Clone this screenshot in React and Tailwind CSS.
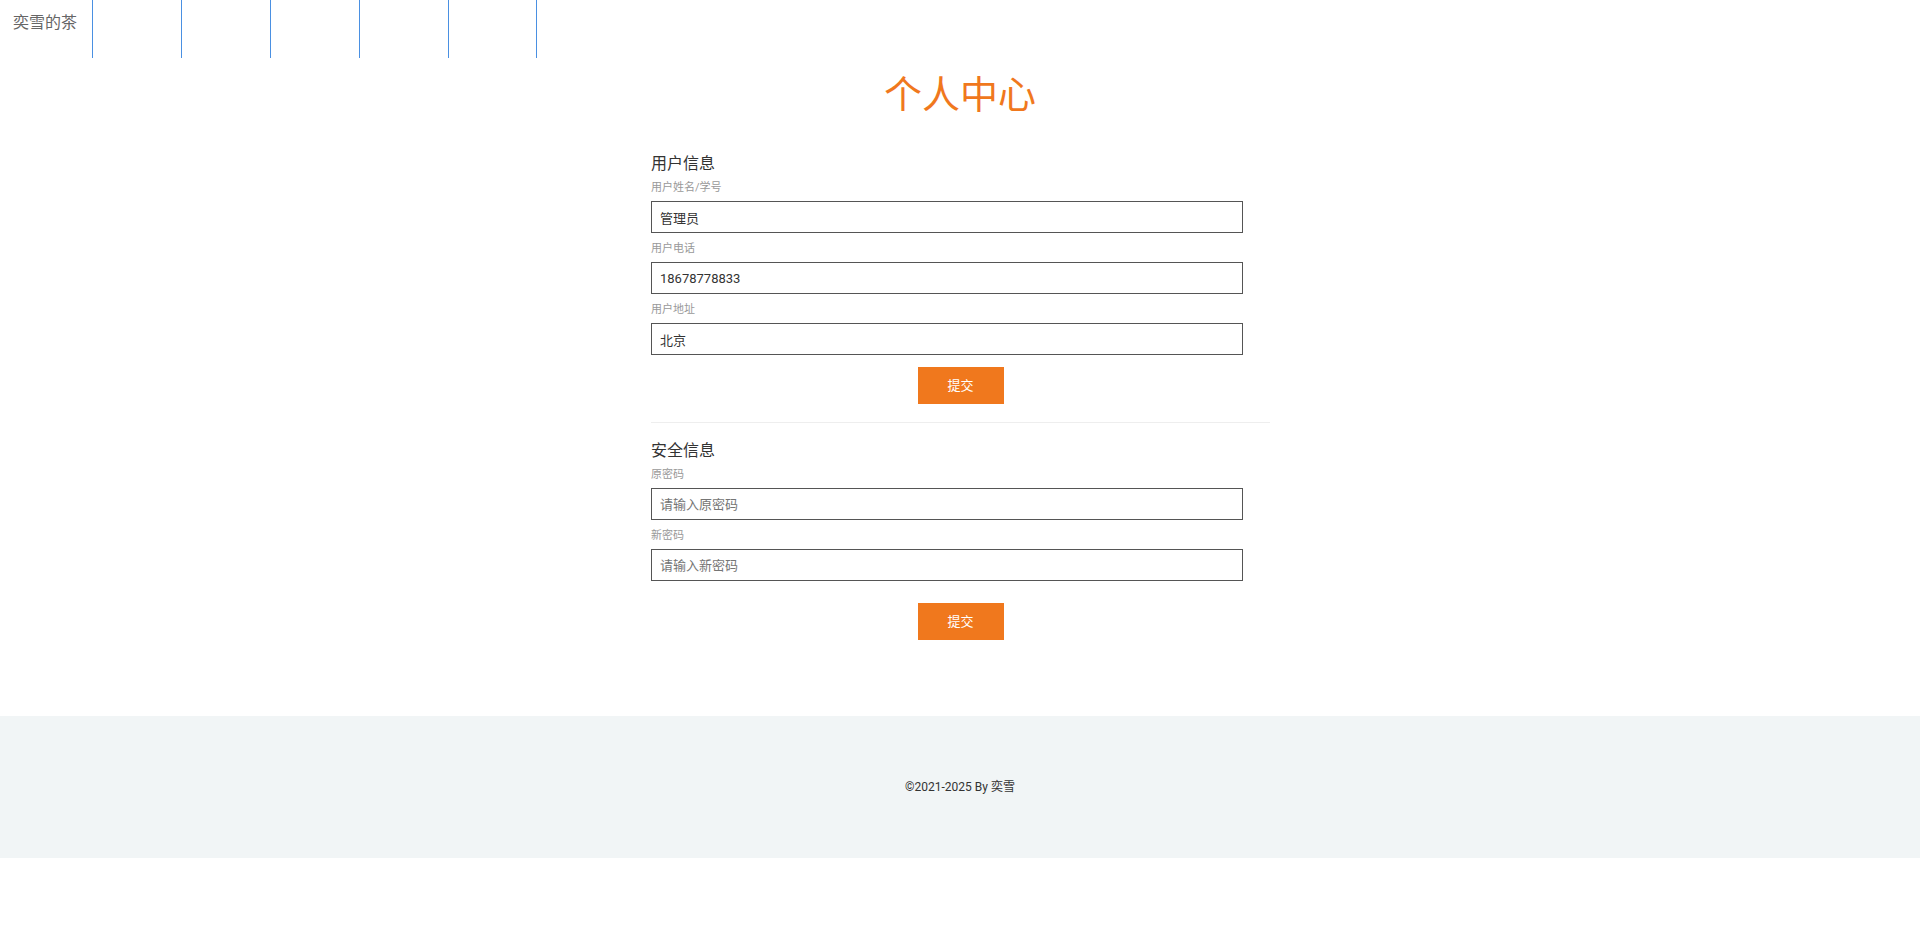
import { useState } from 'react';

const FONT = 'font-[Roboto,"Noto_Sans_CJK_SC",sans-serif]';

const NAV_CELLS = [0, 1, 2, 3, 4];

function Field({ label, value, placeholder, first }) {
  const [val, setVal] = useState(value ?? '');
  return (
    <div className={first ? 'mt-[4px]' : 'mt-[8px]'}>
      <label className="block h-[16px] text-[11px] leading-[16px] text-[#999]">{label}</label>
      <input
        className="mt-[5px] block h-[32px] w-[592px] border border-[#555] px-[8px] text-[13px] text-[#333] outline-none placeholder:text-[#757575]"
        value={val}
        placeholder={placeholder}
        onChange={(e) => setVal(e.target.value)}
      />
    </div>
  );
}

function SubmitButton({ className }) {
  return (
    <div className={`flex justify-center ${className}`}>
      <button
        type="button"
        className="h-[37px] w-[86px] bg-[#f0781d] text-[13px] text-white"
      >
        提交
      </button>
    </div>
  );
}

export default function App() {
  return (
    <div className={`min-h-[938px] bg-white ${FONT}`}>
      {/* top nav */}
      <nav className="flex h-[58px]">
        <div className="w-[92px] pl-[13px] pt-[11px] text-[16px] leading-[24px] text-[#666]">奕雪的茶</div>
        {NAV_CELLS.map((i) => (
          <div
            key={i}
            className={`h-full w-[89px] border-l border-[#4a90e2] ${i === NAV_CELLS.length - 1 ? 'border-r' : ''}`}
          />
        ))}
      </nav>

      <h1 className="mt-[13px] h-[48px] text-center text-[38px] leading-[48px] font-normal text-[#f0781d]">
        个人中心
      </h1>

      <main className="mx-auto mt-[33px] w-[620px] pl-[1px]">
        <h2 className="h-[24px] text-[16px] leading-[24px] text-[#333]">用户信息</h2>
        <Field label="用户姓名/学号" value="管理员" first />
        <Field label="用户电话" value="18678778833" />
        <Field label="用户地址" value="北京" />
        <SubmitButton className="mt-[12px]" />

        <div className="mt-[18px] h-px w-full bg-[#eee]" />

        <h2 className="mt-[16px] h-[24px] text-[16px] leading-[24px] text-[#333]">安全信息</h2>
        <Field label="原密码" placeholder="请输入原密码" first />
        <Field label="新密码" placeholder="请输入新密码" />
        <SubmitButton className="mt-[22px]" />
      </main>

      <footer className="mt-[76px] flex h-[142px] items-center justify-center bg-[#f1f5f6] text-[12px] text-[#333]">
        ©2021-2025 By 奕雪
      </footer>
    </div>
  );
}
